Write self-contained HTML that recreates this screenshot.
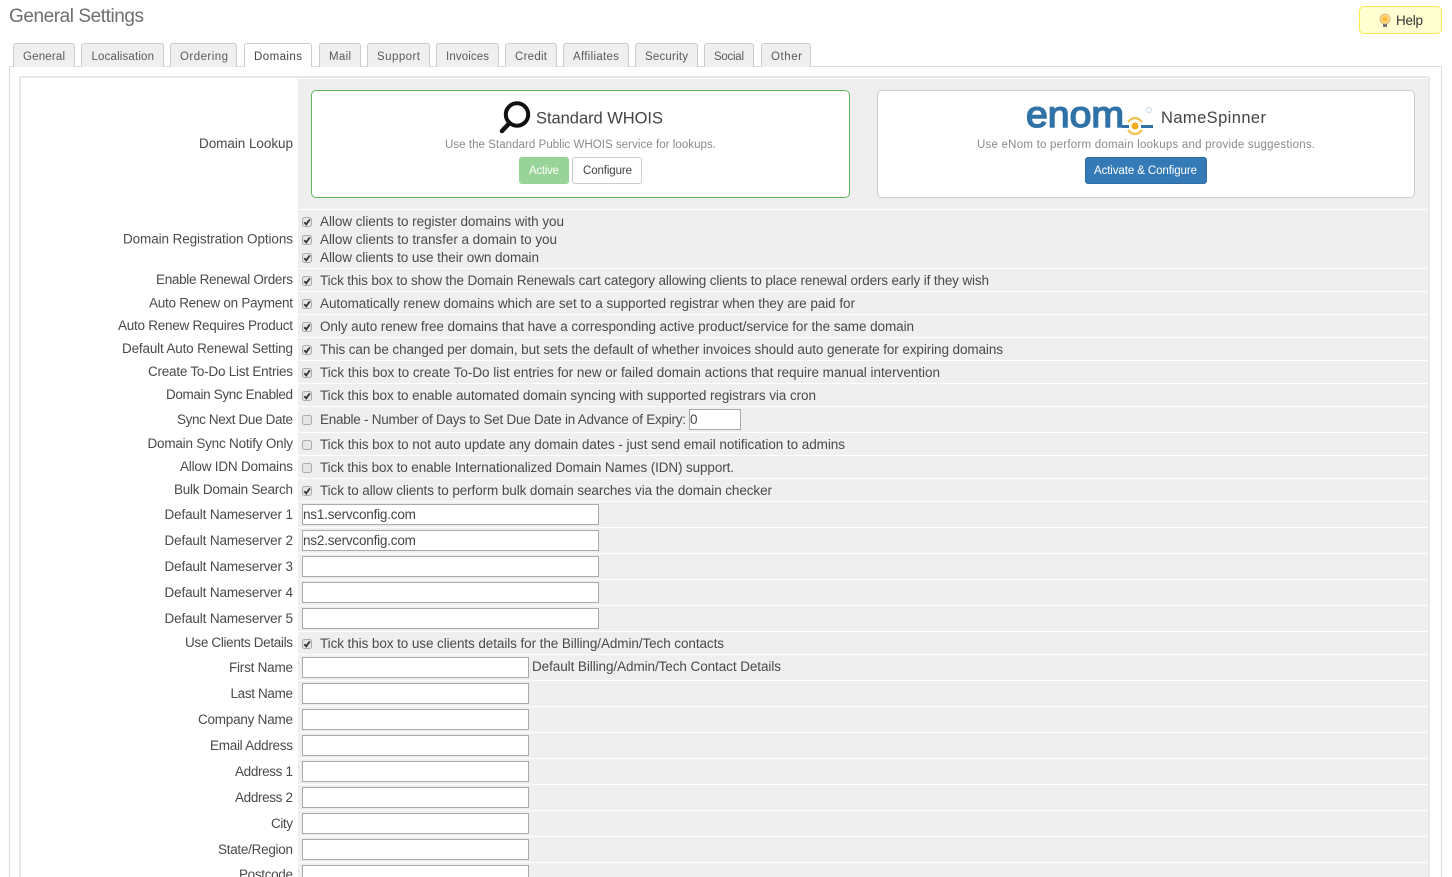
<!DOCTYPE html>
<html><head><meta charset="utf-8"><title>General Settings</title>
<style>
html,body{margin:0;padding:0;background:#fff;overflow:hidden}
#p{position:relative;width:1452px;height:877px;overflow:hidden;font-family:"Liberation Sans",sans-serif}
#p>div,#p>input{position:absolute;box-sizing:border-box}
.tab{top:43px;height:24px;background:#efefef;border:1px solid #ccc;border-bottom:0;border-radius:3px 3px 0 0}
.sep{left:298px;width:1130px;height:1px;background:#fff}
input{margin:0;padding:0 0 0 0;border:1px solid #a9a9a9;background:#fff;font:13.5px "Liberation Sans",sans-serif;color:#444;letter-spacing:-.2px;outline:0;border-radius:0}
.ns{left:302px;width:297px;height:21px}
.ct{left:302px;width:227px;height:21px}
svg text{font-family:"Liberation Sans",sans-serif}
.l{font-size:13.5px;fill:#4a4a4a}
.t{font-size:11.5px;fill:#5a5a5a}
.d{font-size:11.5px;fill:#8a8a8a}
</style></head><body><div id="p">
<div style="left:9px;top:66px;width:1433px;height:820px;border:1px solid #ddd"></div>
<div class="tab" style="left:13px;width:62px"></div>
<div class="tab" style="left:81px;width:83px"></div>
<div class="tab" style="left:170px;width:67px"></div>
<div class="tab" style="left:244px;width:68px;background:#fff"></div>
<div class="tab" style="left:319px;width:42px"></div>
<div class="tab" style="left:367px;width:63px"></div>
<div class="tab" style="left:436px;width:63px"></div>
<div class="tab" style="left:505px;width:52px"></div>
<div class="tab" style="left:563px;width:66px"></div>
<div class="tab" style="left:635px;width:63px"></div>
<div class="tab" style="left:704px;width:50px"></div>
<div class="tab" style="left:761px;width:50px"></div>
<div style="left:1359px;top:6px;width:83px;height:28px;background:#ffffd2;border:1px solid #fdeb4f;border-radius:5px"></div>
<div style="left:19px;top:76px;width:1411px;height:820px;border:2px solid #e4e8ec;border-radius:3px"></div>
<div style="left:298px;top:79px;width:1130px;height:798px;background:#efefef"></div>
<div class="sep" style="top:209px"></div><div class="sep" style="top:268px"></div>
<div class="sep" style="top:291px"></div><div class="sep" style="top:314px"></div>
<div class="sep" style="top:337px"></div><div class="sep" style="top:360px"></div>
<div class="sep" style="top:383px"></div><div class="sep" style="top:406px"></div>
<div class="sep" style="top:432px"></div><div class="sep" style="top:455px"></div>
<div class="sep" style="top:478px"></div><div class="sep" style="top:501px"></div>
<div class="sep" style="top:527px"></div><div class="sep" style="top:553px"></div>
<div class="sep" style="top:579px"></div><div class="sep" style="top:605px"></div>
<div class="sep" style="top:631px"></div><div class="sep" style="top:654px"></div>
<div class="sep" style="top:680px"></div><div class="sep" style="top:706px"></div>
<div class="sep" style="top:732px"></div><div class="sep" style="top:758px"></div>
<div class="sep" style="top:784px"></div><div class="sep" style="top:810px"></div>
<div class="sep" style="top:836px"></div><div class="sep" style="top:862px"></div>
<div style="left:311px;top:90px;width:539px;height:108px;background:#fff;border:1px solid #5cb85c;border-radius:5px"></div>
<div style="left:877px;top:90px;width:538px;height:108px;background:#fff;border:1px solid #ccc;border-radius:5px"></div>
<div style="left:519px;top:157px;width:50px;height:27px;background:#98d397;border-radius:3px"></div>
<div style="left:572px;top:157px;width:70px;height:27px;background:#fff;border:1px solid #ccc;border-radius:3px"></div>
<div style="left:1085px;top:157px;width:122px;height:27px;background:#337ab7;border:1px solid #2e6da4;border-radius:3px"></div>
<input style="left:689px;top:409px;width:52px;height:21px" value="0">
<input class="ns" style="top:504px" value="ns1.servconfig.com">
<input class="ns" style="top:530px" value="ns2.servconfig.com">
<input class="ns" style="top:556px"><input class="ns" style="top:582px">
<input class="ns" style="top:608px">
<input class="ct" style="top:657px"><input class="ct" style="top:683px">
<input class="ct" style="top:709px"><input class="ct" style="top:735px">
<input class="ct" style="top:761px"><input class="ct" style="top:787px">
<input class="ct" style="top:813px"><input class="ct" style="top:839px">
<input class="ct" style="top:865px">
<svg style="position:absolute;left:0;top:0;pointer-events:none" width="1452" height="877" viewBox="0 0 1452 877">
<defs>
<g id="u"><rect x="-4.5" y="-4.5" width="9" height="9" rx="2" fill="#e6e6e6" stroke="#ababab"/></g>
<g id="c"><use href="#u"/><path d="M-2.700 0.200L-0.800 2.400L2.800-2.600" fill="none" stroke="#333" stroke-width="1.800"/></g>
</defs>
<text x="9" y="22" font-size="19" fill="#6e6e6e" textLength="135">General Settings</text>
<g>
<text class="t" x="23" y="60" textLength="42">General</text>
<text class="t" x="91.500" y="60" textLength="62.500">Localisation</text>
<text class="t" x="180" y="60" textLength="48">Ordering</text>
<text class="t" x="254" y="60" textLength="48" style="fill:#444">Domains</text>
<text class="t" x="329" y="60" textLength="22">Mail</text>
<text class="t" x="377" y="60" textLength="43">Support</text>
<text class="t" x="446" y="60" textLength="43">Invoices</text>
<text class="t" x="515" y="60" textLength="32">Credit</text>
<text class="t" x="573" y="60" textLength="46">Affiliates</text>
<text class="t" x="645" y="60" textLength="43">Security</text>
<text class="t" x="714" y="60" textLength="30">Social</text>
<text class="t" x="771" y="60" textLength="31">Other</text>
</g>
<circle cx="1385" cy="19" r="5" fill="#fbd98a" stroke="#e0b878"/><circle cx="1385" cy="19" r="2.500" fill="#fdbb2d"/><rect x="1383" y="24" width="4" height="3" fill="#777"/>
<text x="1396" y="25" font-size="13.500" fill="#333" textLength="27">Help</text>
<circle cx="517" cy="114.500" r="11.200" fill="none" stroke="#111" stroke-width="4"/>
<path d="M509.500 123L502 131" stroke="#111" stroke-width="4.500" stroke-linecap="round"/>
<text x="536" y="123.500" font-size="16.500" fill="#444" textLength="127">Standard WHOIS</text>
<text class="d" x="445" y="148" textLength="271">Use the Standard Public WHOIS service for lookups.</text>
<text x="529" y="174" font-size="11.500" fill="#fff" textLength="30">Active</text>
<text x="583" y="174" font-size="11.500" fill="#444" textLength="49">Configure</text>
<text transform="translate(1026 127) scale(1.06 1)" font-size="37" fill="#2f72a8" stroke="#2f72a8" stroke-width="1.500" stroke-linejoin="round">enom</text>
<path d="M1122 126.500H1129M1141 126.500H1153" stroke="#2f72a8" stroke-width="3"/>
<path d="M1128 122Q1135 114 1142 122M1128 130Q1135 138 1142 130" fill="none" stroke="#eec65e" stroke-width="2.500"/>
<circle cx="1135" cy="126" r="3.500" fill="#f0ab1f"/>
<circle cx="1149" cy="110" r="2.500" fill="none" stroke="#c6d8e6"/>
<text x="1161" y="123" font-size="16.500" fill="#444" textLength="105">NameSpinner</text>
<text class="d" x="977" y="148" textLength="338">Use eNom to perform domain lookups and provide suggestions.</text>
<text x="1094" y="174" font-size="11.500" fill="#fff" textLength="103">Activate &amp; Configure</text>
<text class="l" x="199" y="148" textLength="94">Domain Lookup</text>
<text class="l" x="123" y="243.500" textLength="170">Domain Registration Options</text>
<text class="l" x="156" y="284" textLength="137">Enable Renewal Orders</text>
<text class="l" x="149" y="307.500" textLength="144">Auto Renew on Payment</text>
<text class="l" x="118" y="330" textLength="175">Auto Renew Requires Product</text>
<text class="l" x="122" y="353" textLength="171">Default Auto Renewal Setting</text>
<text class="l" x="148" y="376" textLength="145">Create To-Do List Entries</text>
<text class="l" x="166" y="399" textLength="127">Domain Sync Enabled</text>
<text class="l" x="177" y="424" textLength="116">Sync Next Due Date</text>
<text class="l" x="147.500" y="448" textLength="145.500">Domain Sync Notify Only</text>
<text class="l" x="180" y="471" textLength="113">Allow IDN Domains</text>
<text class="l" x="174" y="494" textLength="119">Bulk Domain Search</text>
<text class="l" x="164.500" y="519" textLength="128.500">Default Nameserver 1</text>
<text class="l" x="164.500" y="545" textLength="128.500">Default Nameserver 2</text>
<text class="l" x="164.500" y="571" textLength="128.500">Default Nameserver 3</text>
<text class="l" x="164.500" y="597" textLength="128.500">Default Nameserver 4</text>
<text class="l" x="164.500" y="623" textLength="128.500">Default Nameserver 5</text>
<text class="l" x="185" y="647" textLength="108">Use Clients Details</text>
<text class="l" x="229" y="672" textLength="64">First Name</text>
<text class="l" x="230.500" y="698" textLength="62.500">Last Name</text>
<text class="l" x="198" y="724" textLength="95">Company Name</text>
<text class="l" x="210" y="750" textLength="83">Email Address</text>
<text class="l" x="235" y="776" textLength="58">Address 1</text>
<text class="l" x="235" y="802" textLength="58">Address 2</text>
<text class="l" x="271" y="828" textLength="22">City</text>
<text class="l" x="218" y="854" textLength="75">State/Region</text>
<text class="l" x="239" y="879" textLength="54">Postcode</text>
<use href="#c" x="307" y="222"/><use href="#c" x="307" y="240"/><use href="#c" x="307" y="258"/>
<use href="#c" x="307" y="281"/><use href="#c" x="307" y="304"/><use href="#c" x="307" y="327"/>
<use href="#c" x="307" y="350"/><use href="#c" x="307" y="373"/><use href="#c" x="307" y="396"/>
<use href="#u" x="307" y="420"/><use href="#u" x="307" y="445"/><use href="#u" x="307" y="468"/>
<use href="#c" x="307" y="491"/><use href="#c" x="307" y="644"/>
<text class="l" x="320" y="226" textLength="244">Allow clients to register domains with you</text>
<text class="l" x="320" y="244" textLength="237">Allow clients to transfer a domain to you</text>
<text class="l" x="320" y="262" textLength="219">Allow clients to use their own domain</text>
<text class="l" x="320" y="285" textLength="669">Tick this box to show the Domain Renewals cart category allowing clients to place renewal orders early if they wish</text>
<text class="l" x="320" y="308" textLength="535">Automatically renew domains which are set to a supported registrar when they are paid for</text>
<text class="l" x="320" y="331" textLength="594">Only auto renew free domains that have a corresponding active product/service for the same domain</text>
<text class="l" x="320" y="354" textLength="683">This can be changed per domain, but sets the default of whether invoices should auto generate for expiring domains</text>
<text class="l" x="320" y="377" textLength="620">Tick this box to create To-Do list entries for new or failed domain actions that require manual intervention</text>
<text class="l" x="320" y="400" textLength="496">Tick this box to enable automated domain syncing with supported registrars via cron</text>
<text class="l" x="320" y="424" textLength="366">Enable - Number of Days to Set Due Date in Advance of Expiry:</text>
<text class="l" x="320" y="449" textLength="525">Tick this box to not auto update any domain dates - just send email notification to admins</text>
<text class="l" x="320" y="472" textLength="414">Tick this box to enable Internationalized Domain Names (IDN) support.</text>
<text class="l" x="320" y="495" textLength="452">Tick to allow clients to perform bulk domain searches via the domain checker</text>
<text class="l" x="320" y="648" textLength="404">Tick this box to use clients details for the Billing/Admin/Tech contacts</text>
<text class="l" x="532" y="671" textLength="249">Default Billing/Admin/Tech Contact Details</text>
</svg>
</div></body></html>
